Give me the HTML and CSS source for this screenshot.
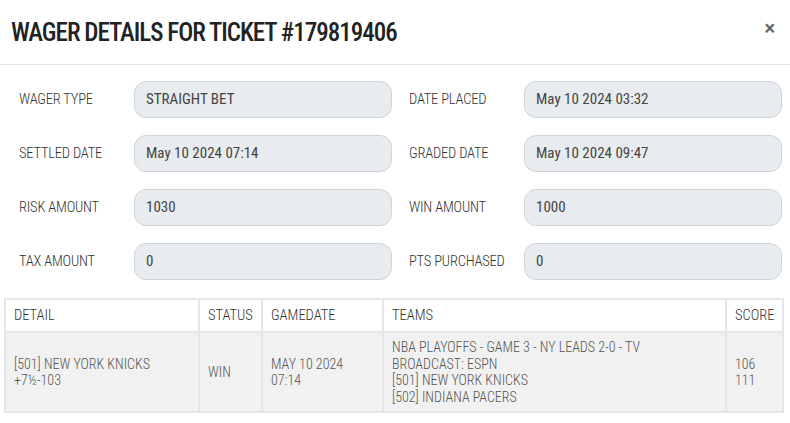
FILE: index.html
```html
<!DOCTYPE html>
<html>
<head>
    <meta charset="UTF-8">
    <title>Wager Details</title>
    <link rel="stylesheet" href="styles.css">
</head>
<body>
    <div class="modal">
        <div class="modal-header">
            <h3>WAGER DETAILS FOR TICKET #179819406</h3>
            <button class="close">&times;</button>
        </div>

        <div class="modal-body">
            <!-- Datos del ticket -->
            <div class="fields">
                <div class="field">
                    <label>WAGER TYPE</label>
                    <div class="value">STRAIGHT BET</div>
                </div>
                <div class="field">
                    <label>DATE PLACED</label>
                    <div class="value">May 10 2024 03:32</div>
                </div>
                <div class="field">
                    <label>SETTLED DATE</label>
                    <div class="value">May 10 2024 07:14</div>
                </div>
                <div class="field">
                    <label>GRADED DATE</label>
                    <div class="value">May 10 2024 09:47</div>
                </div>
                <div class="field">
                    <label>RISK AMOUNT</label>
                    <div class="value">1030</div>
                </div>
                <div class="field">
                    <label>WIN AMOUNT</label>
                    <div class="value">1000</div>
                </div>
                <div class="field">
                    <label>TAX AMOUNT</label>
                    <div class="value">0</div>
                </div>
                <div class="field">
                    <label>PTS PURCHASED</label>
                    <div class="value">0</div>
                </div>
            </div>

            <!-- Detalle de la jugada -->
            <table class="detail">
                <colgroup>
                    <col style="width: 194px">
                    <col style="width: 63px">
                    <col style="width: 121px">
                    <col>
                    <col style="width: 57px">
                </colgroup>
                <thead>
                    <tr>
                        <th>DETAIL</th>
                        <th>STATUS</th>
                        <th>GAMEDATE</th>
                        <th>TEAMS</th>
                        <th>SCORE</th>
                    </tr>
                </thead>
                <tbody>
                    <tr>
                        <td>[501] NEW YORK KNICKS<br>+7&frac12;-103</td>
                        <td>WIN</td>
                        <td>MAY 10 2024<br>07:14</td>
                        <td>NBA PLAYOFFS - GAME 3 - NY LEADS 2-0 - TV<br>BROADCAST: ESPN<br>[501] NEW YORK KNICKS<br>[502] INDIANA PACERS</td>
                        <td>106<br>111</td>
                    </tr>
                </tbody>
            </table>
        </div>
    </div>
</body>
</html>
```
FILE: styles.css
```css
body {
    margin: 0;
    background: #fff;
    font-family: Roboto, "Liberation Sans", sans-serif;
    font-stretch: 75%;
    color: #333;
}
.modal {
    width: 790px;
}
.modal-header {
    display: flex;
    align-items: flex-start;
    justify-content: space-between;
    height: 65px;
    padding: 0 11px;
    border-bottom: 1px solid #dee2e6;
    box-sizing: border-box;
}
.modal-header h3 {
    margin: 0;
    padding-top: 17px;
    font-size: 25px;
    font-weight: 500;
    letter-spacing: -1px;
    line-height: 32px;
    color: #222;
}
.close {
    margin: 18px 4px 0 0;
    padding: 0;
    border: none;
    background: none;
    font-family: Roboto, sans-serif;
    font-size: 20px;
    font-weight: 700;
    line-height: 20px;
    color: #666;
    cursor: pointer;
}
.modal-body {
    padding: 16px 6px 10px 4px;
}
.fields {
    display: grid;
    grid-template-columns: 1fr 1fr;
    column-gap: 17px;
    row-gap: 17px;
    padding: 0 2px 0 15px;
}
.field {
    display: flex;
    align-items: center;
}
.field label {
    width: 115px;
    flex-shrink: 0;
    font-size: 14.5px;
    font-weight: 300;
    letter-spacing: -0.2px;
    color: #333;
}
.value {
    flex: 1;
    height: 37px;
    line-height: 35px;
    padding: 0 11px;
    box-sizing: border-box;
    background: #e9ecef;
    border: 1px solid #ced4da;
    border-radius: 12px;
    font-size: 15px;
    color: #444;
}
.detail {
    width: 100%;
    margin-top: 18px;
    border-collapse: collapse;
    table-layout: fixed;
    font-size: 14px;
    font-weight: 300;
}
.detail th, .detail td {
    border: 2px solid #e3e6ea;
    text-align: left;
    padding: 0 8px;
}
.detail th {
    height: 31px;
    font-size: 14.5px;
    font-weight: 300;
    color: #333;
}
.detail td {
    height: 78px;
    background: #f1f1f1;
    color: #555;
    line-height: 16.5px;
    vertical-align: middle;
}
```
